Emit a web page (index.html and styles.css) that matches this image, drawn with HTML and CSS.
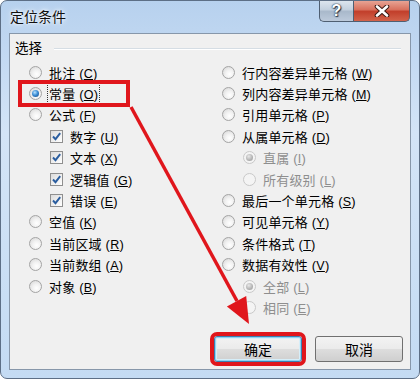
FILE: index.html
```html
<!DOCTYPE html>
<html lang="zh-CN">
<head>
    <meta charset="UTF-8">
    <meta name="viewport" content="width=device-width, initial-scale=1.0">
    <title>定位条件</title>
    <link rel="stylesheet" href="styles.css">
</head>
<body>
    <div class="window">
        <!-- Title bar -->
        <div class="titlebar">
            <span class="title">定位条件</span>
            <div class="caption-btns">
                <span class="cap-btn help">?</span>
                <span class="cap-btn close">
                    <svg width="16" height="12" viewBox="0 0 16 12">
                        <path d="M3 1.5 L13 10.5 M13 1.5 L3 10.5" stroke="#3a1a14" stroke-width="4.6" stroke-linecap="round"/>
                        <path d="M3 1.5 L13 10.5 M13 1.5 L3 10.5" stroke="#ffffff" stroke-width="2.6" stroke-linecap="round"/>
                    </svg>
                </span>
            </div>
        </div>

        <div class="client">
            <div class="group-head"><span>选择</span><i class="rule"></i></div>

            <div class="cols">
                <ul class="col col-left">
                    <li class="opt"><span class="radio"></span><span class="lbl">批注 (<u>C</u>)</span></li>
                    <li class="opt"><span class="radio on"></span><span class="lbl focus">常量 (<u>O</u>)</span></li>
                    <li class="opt"><span class="radio"></span><span class="lbl">公式 (<u>F</u>)</span></li>
                    <li class="opt sub"><span class="check"><svg width="11" height="11" viewBox="0 0 11 11"><path d="M2 5.5 L4.5 8.2 L9.2 2.2" fill="none" stroke="#2a5d9f" stroke-width="1.9"/></svg></span><span class="lbl">数字 (<u>U</u>)</span></li>
                    <li class="opt sub"><span class="check"><svg width="11" height="11" viewBox="0 0 11 11"><path d="M2 5.5 L4.5 8.2 L9.2 2.2" fill="none" stroke="#2a5d9f" stroke-width="1.9"/></svg></span><span class="lbl">文本 (<u>X</u>)</span></li>
                    <li class="opt sub"><span class="check"><svg width="11" height="11" viewBox="0 0 11 11"><path d="M2 5.5 L4.5 8.2 L9.2 2.2" fill="none" stroke="#2a5d9f" stroke-width="1.9"/></svg></span><span class="lbl">逻辑值 (<u>G</u>)</span></li>
                    <li class="opt sub"><span class="check"><svg width="11" height="11" viewBox="0 0 11 11"><path d="M2 5.5 L4.5 8.2 L9.2 2.2" fill="none" stroke="#2a5d9f" stroke-width="1.9"/></svg></span><span class="lbl">错误 (<u>E</u>)</span></li>
                    <li class="opt"><span class="radio"></span><span class="lbl">空值 (<u>K</u>)</span></li>
                    <li class="opt"><span class="radio"></span><span class="lbl">当前区域 (<u>R</u>)</span></li>
                    <li class="opt"><span class="radio"></span><span class="lbl">当前数组 (<u>A</u>)</span></li>
                    <li class="opt"><span class="radio"></span><span class="lbl">对象 (<u>B</u>)</span></li>
                </ul>
                <ul class="col col-right">
                    <li class="opt"><span class="radio"></span><span class="lbl">行内容差异单元格 (<u>W</u>)</span></li>
                    <li class="opt"><span class="radio"></span><span class="lbl">列内容差异单元格 (<u>M</u>)</span></li>
                    <li class="opt"><span class="radio"></span><span class="lbl">引用单元格 (<u>P</u>)</span></li>
                    <li class="opt"><span class="radio"></span><span class="lbl">从属单元格 (<u>D</u>)</span></li>
                    <li class="opt sub disabled"><span class="radio on"></span><span class="lbl">直属 (<u>I</u>)</span></li>
                    <li class="opt sub disabled"><span class="radio"></span><span class="lbl">所有级别 (<u>L</u>)</span></li>
                    <li class="opt"><span class="radio"></span><span class="lbl">最后一个单元格 (<u>S</u>)</span></li>
                    <li class="opt"><span class="radio"></span><span class="lbl">可见单元格 (<u>Y</u>)</span></li>
                    <li class="opt"><span class="radio"></span><span class="lbl">条件格式 (<u>T</u>)</span></li>
                    <li class="opt"><span class="radio"></span><span class="lbl">数据有效性 (<u>V</u>)</span></li>
                    <li class="opt sub disabled"><span class="radio on"></span><span class="lbl">全部 (<u>L</u>)</span></li>
                    <li class="opt sub disabled"><span class="radio"></span><span class="lbl">相同 (<u>E</u>)</span></li>
                </ul>
            </div>

            <div class="actions">
                <button class="btn btn-default">确定</button>
                <button class="btn">取消</button>
            </div>

            <!-- annotation box around 常量 -->
            <div class="callout"></div>
        </div>

        <!-- annotation arrow -->
        <svg class="arrow" width="420" height="379" viewBox="0 0 420 379">
            <line x1="131" y1="107" x2="237" y2="301" stroke="#e0161c" stroke-width="3.5"/>
            <polygon points="249,324 246.2,295.9 226.9,306.5" fill="#e0161c"/>
        </svg>
    </div>
</body>
</html>
```

FILE: styles.css
```css
/* General reset */
body {
    margin: 0;
    padding: 0;
    font-family: "Liberation Sans", "Noto Sans CJK SC", sans-serif;
    background: #ffffff;
}

ul {
    margin: 0;
    padding: 0;
    list-style: none;
}

/* Window frame */
.window {
    position: relative;
    width: 420px;
    height: 379px;
    box-sizing: border-box;
    border: 1px solid #5d6f86;
    border-radius: 7px;
    background: linear-gradient(#b7d1ee 0%, #d3e4f7 35%, #c4dbf3 100%);
    padding: 0 8px 8px 8px;
    display: flex;
    flex-direction: column;
    overflow: hidden;
}

/* Title bar */
.titlebar {
    height: 32px;
    display: flex;
    justify-content: space-between;
    align-items: flex-start;
    padding-left: 1px;
}

.title {
    font-size: 14px;
    line-height: 32px;
    color: #111;
    text-shadow: 0 0 6px #ffffff, 0 0 3px #ffffff;
}

.caption-btns {
    display: flex;
    margin-top: -1px;
    margin-right: 1px;
}

.cap-btn {
    height: 22px;
    display: flex;
    align-items: center;
    justify-content: center;
    border: 1px solid #4f5f72;
    border-top: none;
    box-sizing: border-box;
}

.help {
    width: 34px;
    border-radius: 0 0 0 5px;
    border-right: none;
    background: linear-gradient(#dfe7f0 0%, #c4d1df 45%, #a9b9cb 55%, #bccadb 100%);
    color: #ffffff;
    font-family: "Liberation Sans", sans-serif;
    font-weight: bold;
    font-size: 16px;
    text-shadow: 0 0 2px #2c3a4c, 0 0 1px #2c3a4c, 1px 1px 1px #2c3a4c;
}

.close {
    width: 57px;
    border-radius: 0 0 5px 0;
    background: linear-gradient(#e9a99a 0%, #d9725f 45%, #c23f2b 55%, #d2624a 100%);
}

/* Client area */
.client {
    position: relative;
    flex: 1;
    background: #f0f0f0;
    border: 1px solid #8797aa;
    padding: 7px 7px 0 19px;
    font-size: 13px;
    color: #000;
}

.group-head {
    display: flex;
    align-items: center;
    height: 16px;
    margin-left: -14px;
}

.group-head span {
    font-size: 13.5px;
    line-height: 16px;
}

.rule {
    flex: 1;
    height: 1px;
    margin-left: 12px;
    margin-right: 2px;
    background: #d5dde4;
    border-bottom: 1px solid #ffffff;
}

.cols {
    display: grid;
    grid-template-columns: 193px 1fr;
    margin-top: 4.5px;
}

.opt {
    height: 21.4px;
    display: flex;
    align-items: center;
    gap: 7px;
    white-space: nowrap;
}

.lbl {
    letter-spacing: 0.2px;
}

.lbl u {
    text-decoration: underline;
    text-underline-offset: 1px;
    font-size: 12.5px;
}

.opt.sub {
    padding-left: 21px;
}

.opt.disabled {
    color: #8e8e8e;
}

.focus {
    outline: 1px dotted #333;
    outline-offset: 0;
    padding: 0 1px;
    margin-left: -1px;
}

/* Radio button */
.radio {
    position: relative;
    width: 13px;
    height: 13px;
    box-sizing: border-box;
    flex: none;
    border-radius: 50%;
    border: 1px solid #a4a4a4;
    background: radial-gradient(circle at 60% 65%, #ffffff 0%, #f2f2f2 40%, #d3d3d3 100%);
}

.radio.on::after {
    content: "";
    position: absolute;
    left: 2px;
    top: 2px;
    width: 7px;
    height: 7px;
    border-radius: 50%;
    background: radial-gradient(circle at 40% 35%, #b9e3ff 0%, #3d8fd6 45%, #123f7a 100%);
}

.disabled .radio {
    border-color: #c9c9c9;
    background: #f4f4f4;
}

.disabled .radio.on::after {
    background: radial-gradient(circle at 40% 35%, #e8e8e8 0%, #b2b2b2 60%, #9a9a9a 100%);
}

/* Checkbox */
.check {
    width: 13px;
    height: 13px;
    box-sizing: border-box;
    flex: none;
    border: 1px solid #8f8f8f;
    background: linear-gradient(135deg, #dcdcdc, #ffffff);
    display: flex;
    align-items: center;
    justify-content: center;
}

/* Buttons */
.actions {
    display: flex;
    justify-content: flex-end;
    gap: 13px;
    margin-top: 18px;
}

.btn {
    width: 88px;
    height: 26px;
    border: 1px solid #707070;
    border-radius: 3px;
    background: linear-gradient(#f3f3f3 0%, #ebebeb 48%, #dddddd 52%, #cfcfcf 100%);
    font-family: "Noto Sans CJK SC", sans-serif;
    font-size: 14px;
    color: #000;
    padding: 0;
}

.btn-default {
    border-color: #3c7fb1;
    box-shadow: inset 0 0 0 1px #8fd2f2, inset 0 0 0 2px #d6eef9;
    outline: 4px solid #e0161c;
    outline-offset: 0;
}

/* Red annotation box */
.callout {
    position: absolute;
    left: 8px;
    top: 46px;
    width: 112px;
    height: 27px;
    box-sizing: border-box;
    border: 4px solid #e0161c;
}

/* Red annotation arrow */
.arrow {
    position: absolute;
    left: -1px;
    top: -1px;
    pointer-events: none;
}
```
